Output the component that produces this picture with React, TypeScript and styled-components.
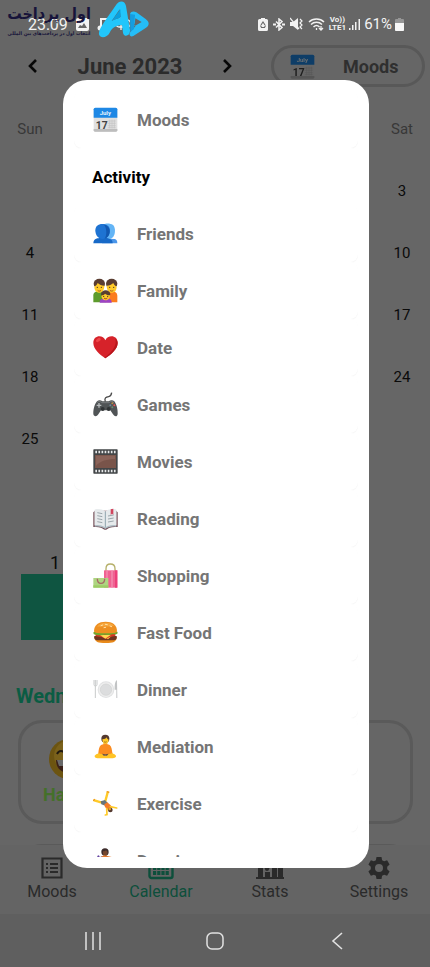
import React from "react";
import styled, { createGlobalStyle } from "styled-components";

const GlobalStyle = createGlobalStyle`
  *, *::before, *::after { box-sizing: border-box; }
  body { margin: 0; background: #666666; font-family: Roboto, "Liberation Sans", sans-serif; }
  button { border: 0; padding: 0; background: none; font: inherit; color: inherit; cursor: pointer; }
  svg { display: block; flex: none; }
`;

/* ---------- layout ---------- */

const Screen = styled.div`
  position: relative;
  display: flex;
  flex-direction: column;
  height: 100vh;
  min-height: 640px;
  overflow: hidden;
  background: #666666;
`;

const StatusBar = styled.header`
  display: flex;
  flex: none;
  align-items: center;
  justify-content: space-between;
  height: 45px;
  padding: 3px 26px 0 28px;
  color: #f2f2f2;
  font-size: 16px;
`;

const StatusGroup = styled.div<{ $gap: number }>`
  display: flex;
  align-items: center;
  gap: ${(p) => p.$gap}px;
`;

const Volte = styled.span`
  display: flex;
  flex-direction: column;
  align-items: center;
  font-size: 8px;
  font-weight: 700;
  line-height: 8px;
`;

const Percent = styled.span`
  font-size: 15px;
`;

const Watermark = styled.div`
  position: absolute;
  top: 0;
  left: 2px;
  display: flex;
  gap: 2px;
  color: #17143a;
  font-family: "DejaVu Sans Condensed", "DejaVu Sans", sans-serif;
`;

const WatermarkText = styled.div`
  display: flex;
  flex-direction: column;
  align-items: center;
  width: 94px;
  white-space: nowrap;
`;

const WatermarkTitle = styled.span`
  font-size: 16px;
  font-weight: 700;
  line-height: 28px;
`;

const WatermarkNote = styled.span`
  font-size: 5px;
  font-weight: 700;
  line-height: 10px;
`;

const Toolbar = styled.div`
  display: flex;
  flex: none;
  align-items: center;
  height: 42px;
  padding: 0 5px 0 21px;
`;

const ArrowButton = styled.button`
  display: grid;
  place-items: center;
  width: 24px;
  height: 32px;
`;

const MonthTitle = styled.h1`
  width: 170px;
  margin: 0;
  padding-top: 2px;
  color: #2b2b2b;
  font-size: 22px;
  font-weight: 700;
  line-height: 28px;
  text-align: center;
`;

const FilterPill = styled.button`
  display: flex;
  flex: 1;
  align-items: center;
  gap: 28px;
  height: 42px;
  margin-left: 32px;
  padding: 0 16px;
  border: 3px solid #585858;
  border-radius: 21px;
  color: #2f2f2f;
  font-size: 18px;
  font-weight: 700;
`;

const DimIcon = styled.span`
  filter: brightness(0.45);
`;

const Main = styled.main`
  flex: 1;
  min-height: 0;
  overflow: hidden;
  padding-top: 11px;
`;

const CalendarGrid = styled.div`
  display: grid;
  grid-template-columns: repeat(7, 42px);
  grid-auto-rows: 62px;
  justify-content: space-between;
  align-items: center;
  justify-items: center;
  padding: 0 7px 0 9px;
  font-size: 15px;
`;

const Weekday = styled.span`
  color: #383838;
`;

const Day = styled.button`
  width: 42px;
  height: 42px;
  color: #0a0a0a;
`;

const Tally = styled.div`
  width: 68px;
  margin: 83px 0 0 21px;
  text-align: center;
  font-size: 18px;
  line-height: 20px;
  color: #0a0a0a;
`;

const TallyBar = styled.div`
  height: 66px;
  margin-top: 1px;
  background: #0f5541;
`;

const DateTitle = styled.h2`
  margin: 44px 16px 12px;
  color: #0b5c43;
  font-size: 20px;
  font-weight: 700;
  line-height: 24px;
`;

const MoodCard = styled.section`
  height: 104px;
  margin: 0 17px 20px 18px;
  padding: 16px 22px;
  border: 3px solid #5a5a5a;
  border-radius: 24px;
`;

const MoodEntry = styled.div`
  display: inline-flex;
  flex-direction: column;
  align-items: center;
  gap: 5px;
  color: #44702a;
  font-size: 18px;
  font-weight: 700;
  line-height: 22px;
`;

const TabBar = styled.nav`
  display: flex;
  flex: none;
  justify-content: space-between;
  height: 69px;
  padding: 11px 11px 0 12px;
  background: #646464;
`;

const Tab = styled.button<{ $active?: boolean }>`
  display: flex;
  flex-direction: column;
  align-items: center;
  gap: 2px;
  width: 80px;
  height: 50px;
  color: ${(p) => (p.$active ? "#0d4f3b" : "#2a2a2a")};
  font-size: 16px;
  line-height: 20px;
`;

const SystemNav = styled.nav`
  display: grid;
  flex: none;
  grid-template-columns: repeat(3, 1fr);
  height: 53px;
  padding: 0 32px;
  background: #5f5f5f;
`;

const SystemButton = styled.button`
  display: grid;
  place-items: center;
`;

/* ---------- dialog ---------- */

const Overlay = styled.div`
  position: absolute;
  inset: 0;
  display: flex;
  padding: 80px 61px 99px 63px;
`;

const Dialog = styled.div`
  display: flex;
  flex: 1;
  min-width: 0;
  padding: 11px 11px 11px;
  border-radius: 24px;
  background: #ffffff;
`;

const OptionList = styled.div`
  flex: 1;
  overflow-y: auto;
  scrollbar-width: none;
`;

const Option = styled.button`
  display: flex;
  align-items: center;
  gap: 19px;
  width: 100%;
  height: 57px;
  padding: 0 19px;
  border-radius: 8px;
  background: #ffffff;
  box-shadow: 0 1px 1px rgba(0, 0, 0, 0.04);
  color: #757575;
  font-size: 17px;
  font-weight: 700;
`;

const GroupTitle = styled.h3`
  height: 57px;
  margin: 0;
  padding: 0 18px;
  border-radius: 8px;
  background: #ffffff;
  color: #000000;
  font-size: 17px;
  font-weight: 700;
  line-height: 58px;
`;

/* ---------- emoji drawings ---------- */

const Emoji = ({ children }: { children: React.ReactNode }) => (
  <svg width="25" height="25" viewBox="0 0 75 75" aria-hidden="true">
    {children}
  </svg>
);

const CalendarEmoji = () => (
  <Emoji>
    <rect x="2" y="4" width="71" height="70" rx="4" fill="#e0e0e0" />
    <path d="M2 32h71v-25a5 5 0 0 0-5-5H7a5 5 0 0 0-5 5z" fill="#1e88e5" />
    <path d="M2 66h71v4a4 4 0 0 1-4 4H6a4 4 0 0 1-4-4z" fill="#bdbdbd" />
    <path d="M44 42h24M44 49h24M44 56h24M44 62h24M50 38v26M57 38v26M64 38v26" stroke="#c2c2c2" strokeWidth="2" />
    <text x="37" y="23" textAnchor="middle" fontFamily="Roboto, sans-serif" fontSize="18" fontWeight="700" fill="#e3f2fd">July</text>
    <text x="26" y="65" textAnchor="middle" fontFamily="Roboto, sans-serif" fontSize="31" fontWeight="700" fill="#424242">17</text>
  </Emoji>
);

const FriendsEmoji = () => (
  <Emoji>
    <path d="M27 67c0-9 8-12 17-14l22 1c5 2 7 6 7 13z" fill="#4b96ea" />
    <path d="M33 10c6-4 20-3 27 2 7 6 7 20 4 29-3 8-8 12-15 13L36 50z" fill="#64b5f6" />
    <path d="M1 67c0-8 4-13 12-15 6-1 9-2 9-5h17c0 3 5 4 10 6 7 2 10 6 10 14z" fill="#1769c7" />
    <path d="M7 28C7 16 15 9 28 9s23 7 23 19c0 15-9 26-22 26S7 43 7 28z" fill="#1e73d2" />
    <path d="M33 11c11 2 17 10 17 20 0 12-7 20-15 22 7-12 7-31-2-42z" fill="#1258b0" />
  </Emoji>
);

const FamilyEmoji = () => (
  <Emoji>
    <path d="M1 73V52c0-8 7-12 18-12s19 5 19 13v20z" fill="#5d9b2c" />
    <path d="M37 73V54c0-9 8-14 19-14s17 5 17 13v20z" fill="#fb7c1f" />
    <ellipse cx="19" cy="17" rx="17" ry="15" fill="#5a3d31" />
    <ellipse cx="56" cy="17" rx="17" ry="15" fill="#5a3d31" />
    <path d="M4 26c4-2 8-6 10-11 5 5 12 8 20 8 0 13-6 21-15 21S4 37 4 26z" fill="#ffca28" />
    <path d="M71 26c-4-2-8-6-10-11-5 5-12 8-20 8 0 13 6 21 15 21s15-7 15-18z" fill="#ffca28" />
    <path d="M14 37c3 3 7 3 10 0M51 37c3 3 7 3 10 0" stroke="#a05623" strokeWidth="3" fill="none" />
    <g fill="#493029"><circle cx="13" cy="28" r="2" /><circle cx="25" cy="28" r="2" /><circle cx="50" cy="28" r="2" /><circle cx="62" cy="28" r="2" /></g>
    <path d="M20 74c0-10 6-13 18-13s18 3 18 13z" fill="#9c43c5" />
    <ellipse cx="38" cy="48" rx="14" ry="11" fill="#5a3d31" />
    <path d="M25 53c5-2 9-3 11-6 5 4 9 5 15 5 0 9-6 15-13 15s-13-6-13-14z" fill="#ffca28" />
    <path d="M33 60c3 3 7 3 10 0" stroke="#a02a2a" strokeWidth="3" fill="none" />
    <circle cx="32" cy="55" r="2" fill="#493029" /><circle cx="44" cy="55" r="2" fill="#493029" />
  </Emoji>
);

const HeartEmoji = () => (
  <Emoji>
    <path d="M37 70C20 58 1 43 1 24 1 10 10 4 19 4c8 0 15 4 18 12C40 8 48 4 56 4c9 0 18 6 18 20 0 19-20 34-37 46z" fill="#d6222a" />
    <path d="M67 11c5 17-6 38-33 57l3 2c17-12 37-27 37-46 0-6-3-10-7-13z" fill="#b7161c" />
    <ellipse cx="16" cy="15" rx="8" ry="5" transform="rotate(-35 16 15)" fill="#ee4548" />
  </Emoji>
);

const GameEmoji = () => (
  <Emoji>
    <path d="M37 29c-4-11 2-14 10-15 7-1 8-5 9-12" stroke="#4a4a4a" strokeWidth="4" fill="none" />
    <path d="M12 28c6-5 12-3 16 0h19c5-4 12-5 17 0 7 9 11 27 10 38-1 9-9 9-14 1l-8-12H24l-8 12c-5 8-14 7-15-1-1-13 4-30 11-38z" fill="#505456" />
    <path d="M12 31c6-4 11-3 15 1h21c5-5 11-5 15 0" stroke="#787c7e" strokeWidth="3" fill="none" />
    <path d="M18 33v14M11 40h14" stroke="#b8bcbe" strokeWidth="4" />
    <circle cx="29" cy="51" r="6" fill="#303436" /><circle cx="47" cy="51" r="6" fill="#303436" />
    <circle cx="58" cy="34" r="3" fill="#b98a45" /><circle cx="64" cy="40" r="3" fill="#ef5350" />
    <circle cx="52" cy="40" r="3" fill="#6d8797" /><circle cx="58" cy="46" r="3" fill="#6b8a6d" />
  </Emoji>
);

const FilmEmoji = () => (
  <Emoji>
    <rect x="1" y="1" width="73" height="73" rx="2" fill="#424547" />
    <rect x="6" y="18" width="63" height="39" fill="#79544a" />
    <path d="M9 20h57v10C42 30 22 36 9 50z" fill="#8a6359" />
    <path d="M7 9h61M7 66h61" stroke="#e7e9ea" strokeWidth="7" strokeDasharray="5 4.3" />
  </Emoji>
);

const BookEmoji = () => (
  <Emoji>
    <path d="M1 19l5-5h63l5 5v44c-11 0-24 1-30 5-3 4-11 4-14 0-7-4-18-5-29-5z" fill="#6d4650" />
    <path d="M5 11c12-3 25-1 32 6 7-7 20-9 33-6v47c-13-3-25 0-33 6-8-6-20-9-32-6z" fill="#eceff1" />
    <path d="M37 17v46c-8-6-20-8-32-5v4c12-2 24 0 32 7 8-7 20-9 33-7v-4" fill="#b0bec5" />
    <path d="M5 11c12-3 25-1 32 6 7-7 20-9 33-6v47c-13-3-25 0-33 6-8-6-20-9-32-6z" fill="#e6eaec" />
    <path d="M37 17v47" stroke="#90a4ae" strokeWidth="3" />
    <path d="M13 20l15 3M13 29l15 3M13 38l15 3M13 47l15 3M45 30l17-3M45 39l17-3M45 48l17-3" stroke="#8b989e" strokeWidth="2.5" />
    <path d="M53 10l8-2v18l-4-3-4 4z" fill="#d1445d" />
  </Emoji>
);

const BagsEmoji = () => (
  <Emoji>
    <path d="M39 24V17c0-9 4-14 13-14s14 5 14 14v7" stroke="#b6b06a" strokeWidth="4" fill="none" />
    <path d="M33 22h40v52H33z" fill="#f06292" />
    <path d="M42 22v52M57 22v52" stroke="#f48fb1" strokeWidth="4" />
    <path d="M66 22h7v52h-7z" fill="#ec407a" />
    <path d="M1 45h45v29H1z" fill="#aed581" />
    <path d="M1 67h45v7H1z" fill="#9ccc65" />
    <path d="M13 47c0 19 22 19 22 0" stroke="#a66a65" strokeWidth="4" fill="none" />
  </Emoji>
);

const BurgerEmoji = () => (
  <Emoji>
    <path d="M4 50c0 16 12 19 34 19s33-3 33-19z" fill="#e98a1a" />
    <path d="M4 48h67c2 8-2 13-9 13H13C6 61 2 55 4 48z" fill="#6d3520" />
    <path d="M13 42h49L45 58z" fill="#ffd740" />
    <path d="M7 41h60v7l-17 3-10 6-15-6-17-2z" fill="#d93623" />
    <path d="M21 45h32L37 56z" fill="#ffd54f" />
    <path d="M2 36l71-1c3 6-2 9-9 8-8-1-8 2-16 2s-11-2-18 0-17 0-22-1c-6 0-8-4-6-8z" fill="#71a72c" />
    <path d="M3 34C3 14 18 5 38 5s34 9 34 29c0 5-10 6-34 6S3 39 3 34z" fill="#ed8f21" />
    <path d="M12 20C18 11 27 8 39 8s19 3 24 9c-15 4-34 1-51 3z" fill="#f6a63c" />
    <path d="M24 17l5-2M37 13l6 1M51 18l5 2M33 23l5-1" stroke="#ffe0a3" strokeWidth="3" strokeLinecap="round" />
  </Emoji>
);

const DinnerEmoji = () => (
  <Emoji>
    <circle cx="39" cy="38" r="25" fill="#e1e2e3" />
    <circle cx="39" cy="38" r="22" fill="#eeeeee" />
    <circle cx="39" cy="38" r="17" fill="#dcddde" stroke="#d0d1d2" strokeWidth="2" />
    <path d="M3 9v13c0 7 9 7 9 0V9M7 9v54" stroke="#c8cacb" strokeWidth="3" fill="none" />
    <path d="M72 9c-7 5-7 16-7 29h5v25h3z" fill="#c2c4c5" />
  </Emoji>
);

const MeditateEmoji = () => (
  <Emoji>
    <circle cx="37" cy="14" r="12" fill="#543930" />
    <path d="M28 16c7 0 11-3 13-6 1 4 3 6 6 7 0 8-4 12-10 12s-9-5-9-13z" fill="#ffca28" />
    <path d="M31 27h12v8H31z" fill="#fbb92d" />
    <path d="M22 57L15 67M53 57l6 10" stroke="#ffc02a" strokeWidth="9" />
    <path d="M24 33c8-4 19-4 26 0 6 5 7 15 8 25l-9 4H25l-9-4c1-10 2-20 8-25z" fill="#fb8c20" />
    <path d="M5 65c8-9 17-8 32 0 15-8 25-9 32 0 1 8-11 8-20 8H24C14 73 4 73 5 65z" fill="#ffc426" />
    <path d="M27 59l10 2 10-2-5 6H32z" fill="#6b5143" />
    <path d="M33 23c3 2 6 2 8 0" stroke="#754b24" strokeWidth="2" fill="none" />
  </Emoji>
);

const CartwheelEmoji = () => (
  <Emoji>
    <path d="M34 37L4 28M36 34L44 4" stroke="#ffca28" strokeWidth="7" strokeLinecap="round" />
    <path d="M1 30l4-6M41 2l8 2" stroke="#ee991f" strokeWidth="4" />
    <path d="M23 31l13-4 8 9-7 8-12-4z" fill="#68747a" />
    <path d="M34 40l9-6c7 6 13 10 14 16l-11 8c-6-4-12-10-12-18z" fill="#f47b28" />
    <path d="M41 53l1 18-5 1M52 47l19 4" stroke="#ffca28" strokeWidth="5" strokeLinecap="round" fill="none" />
    <circle cx="52" cy="57" r="7" fill="#543930" />
    <circle cx="50" cy="54" r="4" fill="#e5a528" />
  </Emoji>
);

const DancerEmoji = () => (
  <Emoji>
    <circle cx="36" cy="12" r="11" fill="#3d2c2b" />
    <path d="M30 10c6 0 8-2 9-4l5 7c0 7-3 11-8 11s-7-6-6-14z" fill="#74472e" />
    <path d="M23 26l11-4 22 5 3 27-17 16-13-24z" fill="#e57a2d" />
    <path d="M28 28l-9 3-4-8" stroke="#6240a0" strokeWidth="6" fill="none" />
    <path d="M38 64v10M49 62l7 12" stroke="#74472e" strokeWidth="6" />
  </Emoji>
);

const HappyFace = () => (
  <svg width="40" height="40" viewBox="0 0 40 40" aria-hidden="true">
    <circle cx="20" cy="20" r="20" fill="#6c5411" />
    <circle cx="21" cy="17" r="16" fill="#7a611b" />
    <path d="M8 15c2-4 6-4 8 0M24 15c2-4 6-4 8 0" stroke="#201910" strokeWidth="2" fill="none" />
    <path d="M7 21h26c0 8-5 13-13 13S7 29 7 21z" fill="#3b2119" />
    <path d="M8 21h24l-2 6H10z" fill="#696969" />
  </svg>
);

/* ---------- interface icons ---------- */

const Arrow = ({ flip }: { flip?: boolean }) => (
  <svg width="10" height="14" viewBox="0 0 10 14" fill="none" stroke="#080808" strokeWidth="2.6">
    <path d={flip ? "M2 1l6 6-6 6" : "M8 1L2 7l6 6"} />
  </svg>
);

const PictureIcon = () => (
  <svg width="13" height="13" viewBox="0 0 13 13">
    <path fillRule="evenodd" fill="#f2f2f2" d="M2 0h9a2 2 0 0 1 2 2v9a2 2 0 0 1-2 2H2a2 2 0 0 1-2-2V2a2 2 0 0 1 2-2zM2 10h9L8 5 6 8 4 7zM4 3a1 1 0 1 0 0 2 1 1 0 0 0 0-2z" />
  </svg>
);

const MusicIcon = () => (
  <svg width="11" height="14" viewBox="0 0 11 14" fill="#f2f2f2">
    <path d="M3 1h7v2H5v8H3z" /><circle cx="3" cy="11" r="2.5" /><path d="M7 10h3v3H7z" />
  </svg>
);

const MessageIcon = () => (
  <svg width="14" height="14" viewBox="0 0 14 14" fill="none" stroke="#f2f2f2" strokeWidth="1.3">
    <path d="M5 10H3a3 3 0 0 1 0-6 4 4 0 0 1 8-1 3 3 0 0 1 0 7H9" /><path d="M5 13V6h3a2 2 0 0 1 0 4H5" />
  </svg>
);

const SaverIcon = () => (
  <svg width="10" height="13" viewBox="0 0 10 13">
    <path d="M3 0h4v1h1.5a1.5 1.5 0 0 1 1.5 1.5v9A1.5 1.5 0 0 1 8.5 13h-7A1.5 1.5 0 0 1 0 11.5v-9A1.5 1.5 0 0 1 1.5 1H3z" fill="#f2f2f2" />
    <path d="M3 7l2-3 2 3M2.5 7.500L3.5 9.5h3l1-2" stroke="#666" strokeWidth="1.1" fill="none" />
  </svg>
);

const BluetoothIcon = () => (
  <svg width="12" height="13" viewBox="0 0 12 13" fill="none" stroke="#f2f2f2" strokeWidth="1.5">
    <path d="M3 3.500l6 6L6 12V1l3 2.500-6 6" /><path d="M0 6.500h3M9 6.500h3" strokeWidth="2" />
  </svg>
);

const MuteIcon = () => (
  <svg width="13" height="14" viewBox="0 0 13 14" fill="#f2f2f2">
    <path d="M0 5h3l5-4v12L3 9H0z" />
    <path d="M0 1l9 11M10 2l2 2-2 2 2 2-2 2 2 2" stroke="#f2f2f2" strokeWidth="1.2" fill="none" />
  </svg>
);

const WifiIcon = () => (
  <svg width="18" height="14" viewBox="0 0 18 14" fill="none" stroke="#f2f2f2" strokeWidth="1.5">
    <path d="M1 5c4-4 11-4 15 0M3 7.500c3-3 8-3 11 0M5.500 10c2-2 4-2 6 0" />
    <path d="M8.500 11v2M13 9v4M11 11l2 2 2-2" strokeWidth="1.3" />
  </svg>
);

const SignalIcon = () => (
  <svg width="12" height="11" viewBox="0 0 12 11" fill="#f2f2f2">
    <path d="M0 9h1.500v2H0zM3 6h1.500v5H3zM6 3h1.500v8H6zM9.500 0H11v11H9.500z" />
  </svg>
);

const BatteryIcon = () => (
  <svg width="9" height="13" viewBox="0 0 9 13">
    <path d="M3 0h3v1h2a1 1 0 0 1 1 1v10a1 1 0 0 1-1 1H1a1 1 0 0 1-1-1V2a1 1 0 0 1 1-1h2z" fill="#969696" />
    <path d="M0 5h9v7a1 1 0 0 1-1 1H1a1 1 0 0 1-1-1z" fill="#f7f7f7" />
  </svg>
);

const BrandMark = () => (
  <svg width="53" height="39" viewBox="0 0 159 117" aria-hidden="true">
    <path fillRule="evenodd" d="M4 106C-3 92 22 62 52 18 63 0 80 1 84 18l12 72c2 18-18 24-21 8l-3-23C52 77 42 84 35 98c-7 14-25 18-31 8zM41 63c9-5 18-8 27-9l-3-26z" fill="#22c6fb" />
    <path d="M67 28L41 63c9-5 18-8 27-9z" fill="#0b9edb" />
    <path fillRule="evenodd" d="M96 42c3-8 11-9 19-5l28 20c12 9 12 19 0 27l-37 24c-9 5-15-4-9-12l15-17zm16 13l-3 24 22-13z" fill="#25bdf7" />
    <path d="M96 42l15 2-3 43-11 9z" fill="#159de0" />
  </svg>
);

const ListIcon = () => (
  <svg width="24" height="24" viewBox="0 0 24 24" fill="none" stroke="currentColor" strokeWidth="2.2">
    <path d="M2.500 2.500h19v19h-19z" /><path d="M6 8h2M10 8h8M6 12h2M10 12h8M6 16h2M10 16h8" />
  </svg>
);

const MonthIcon = () => (
  <svg width="26" height="24" viewBox="0 0 26 24" fill="none" stroke="currentColor" strokeWidth="2.4">
    <rect x="1.500" y="3" width="23" height="19" rx="2" />
    <path d="M1 7h24M7 0v5M19 0v5" />
    <path d="M5 12h16M5 17h16" strokeWidth="4" strokeDasharray="3.2 1" />
  </svg>
);

const StatsIcon = () => (
  <svg width="28" height="24" viewBox="0 0 28 24" fill="currentColor">
    <path d="M0 21h28v2H0zM2 12h5v10H2zM9 16h5v6H9zM16 9h5v13h-5zM22 6h5v16h-5z" />
    <circle cx="11" cy="13" r="2" />
    <path d="M4 7l7 6 12-9" stroke="currentColor" strokeWidth="2" fill="none" />
  </svg>
);

const GearIcon = () => (
  <svg width="24" height="24" viewBox="0 0 24 24" fill="currentColor">
    <path fillRule="evenodd" d="M9.500 1h5l.6 3.200 2 1.100 3-1.100L22.600 8.500 20.200 10.700v2.600l2.400 2.200-2.500 4.300-3-1.100-2 1.100-.6 3.200h-5l-.6-3.200-2-1.100-3 1.100-2.500-4.300 2.400-2.200v-2.600L1.400 8.500l2.500-4.300 3 1.100 2-1.100zM12 8a4 4 0 1 0 0 8 4 4 0 0 0 0-8z" />
  </svg>
);

const RecentsIcon = () => (
  <svg width="18" height="18" viewBox="0 0 18 18" stroke="#e2e2e2" strokeWidth="1.5">
    <path d="M2 0v18M9 0v18M16 0v18" />
  </svg>
);

const HomeIcon = () => (
  <svg width="18" height="18" viewBox="0 0 18 18" fill="none" stroke="#e2e2e2" strokeWidth="1.5">
    <rect x="1" y="1" width="16" height="16" rx="5" />
  </svg>
);

const BackIcon = () => (
  <svg width="12" height="18" viewBox="0 0 12 18" fill="none" stroke="#e2e2e2" strokeWidth="1.6">
    <path d="M11 1L2 9l9 8" />
  </svg>
);

/* ---------- data ---------- */

const weekdays = ["Sun", "Mon", "Tue", "Wed", "Thu", "Fri", "Sat"];
const leadingBlanks = 4;
const days = Array.from({ length: 30 }, (_, i) => i + 1);

const activities = [
  { label: "Friends", Icon: FriendsEmoji },
  { label: "Family", Icon: FamilyEmoji },
  { label: "Date", Icon: HeartEmoji },
  { label: "Games", Icon: GameEmoji },
  { label: "Movies", Icon: FilmEmoji },
  { label: "Reading", Icon: BookEmoji },
  { label: "Shopping", Icon: BagsEmoji },
  { label: "Fast Food", Icon: BurgerEmoji },
  { label: "Dinner", Icon: DinnerEmoji },
  { label: "Mediation", Icon: MeditateEmoji },
  { label: "Exercise", Icon: CartwheelEmoji },
  { label: "Dancing", Icon: DancerEmoji },
];

const tabs = [
  { label: "Moods", Icon: ListIcon },
  { label: "Calendar", Icon: MonthIcon, active: true },
  { label: "Stats", Icon: StatsIcon },
  { label: "Settings", Icon: GearIcon },
];

export default function App() {
  return (
    <Screen>
      <GlobalStyle />
      <StatusBar>
        <StatusGroup $gap={8}>
          <span>23:09</span>
          <PictureIcon />
          <MusicIcon />
          <MessageIcon />
        </StatusGroup>
        <StatusGroup $gap={3}>
          <StatusGroup $gap={5}>
            <SaverIcon />
            <BluetoothIcon />
            <MuteIcon />
            <WifiIcon />
          </StatusGroup>
          <Volte>
            <span>Vo))</span>
            <span>LTE1</span>
          </Volte>
          <SignalIcon />
          <Percent>61%</Percent>
          <BatteryIcon />
        </StatusGroup>
      </StatusBar>

      <Toolbar>
        <ArrowButton aria-label="Previous month"><Arrow /></ArrowButton>
        <MonthTitle>June 2023</MonthTitle>
        <ArrowButton aria-label="Next month"><Arrow flip /></ArrowButton>
        <FilterPill>
          <DimIcon><CalendarEmoji /></DimIcon>
          Moods
        </FilterPill>
      </Toolbar>

      <Main>
        <CalendarGrid>
          {weekdays.map((d) => <Weekday key={d}>{d}</Weekday>)}
          {Array.from({ length: leadingBlanks }, (_, i) => <span key={`blank${i}`} />)}
          {days.map((d) => <Day key={d}>{d}</Day>)}
        </CalendarGrid>
        <Tally>
          1
          <TallyBar />
        </Tally>
        <DateTitle>Wednesday</DateTitle>
        <MoodCard>
          <MoodEntry>
            <HappyFace />
            Happy
          </MoodEntry>
        </MoodCard>
        <MoodCard />
      </Main>

      <TabBar>
        {tabs.map(({ label, Icon, active }) => (
          <Tab key={label} $active={active}>
            <Icon />
            {label}
          </Tab>
        ))}
      </TabBar>
      <SystemNav>
        <SystemButton aria-label="Recent apps"><RecentsIcon /></SystemButton>
        <SystemButton aria-label="Home"><HomeIcon /></SystemButton>
        <SystemButton aria-label="Back"><BackIcon /></SystemButton>
      </SystemNav>

      <Overlay>
        <Dialog role="dialog" aria-modal="true" aria-label="Choose what to show">
          <OptionList>
            <Option><CalendarEmoji />Moods</Option>
            <GroupTitle>Activity</GroupTitle>
            {activities.map(({ label, Icon }) => (
              <Option key={label}><Icon />{label}</Option>
            ))}
          </OptionList>
        </Dialog>
      </Overlay>

      <Watermark>
        <WatermarkText dir="rtl" lang="fa">
          <WatermarkTitle>اول پرداخت</WatermarkTitle>
          <WatermarkNote>انتخاب اول در پرداخت‌های بین المللی</WatermarkNote>
        </WatermarkText>
        <BrandMark />
      </Watermark>
    </Screen>
  );
}
